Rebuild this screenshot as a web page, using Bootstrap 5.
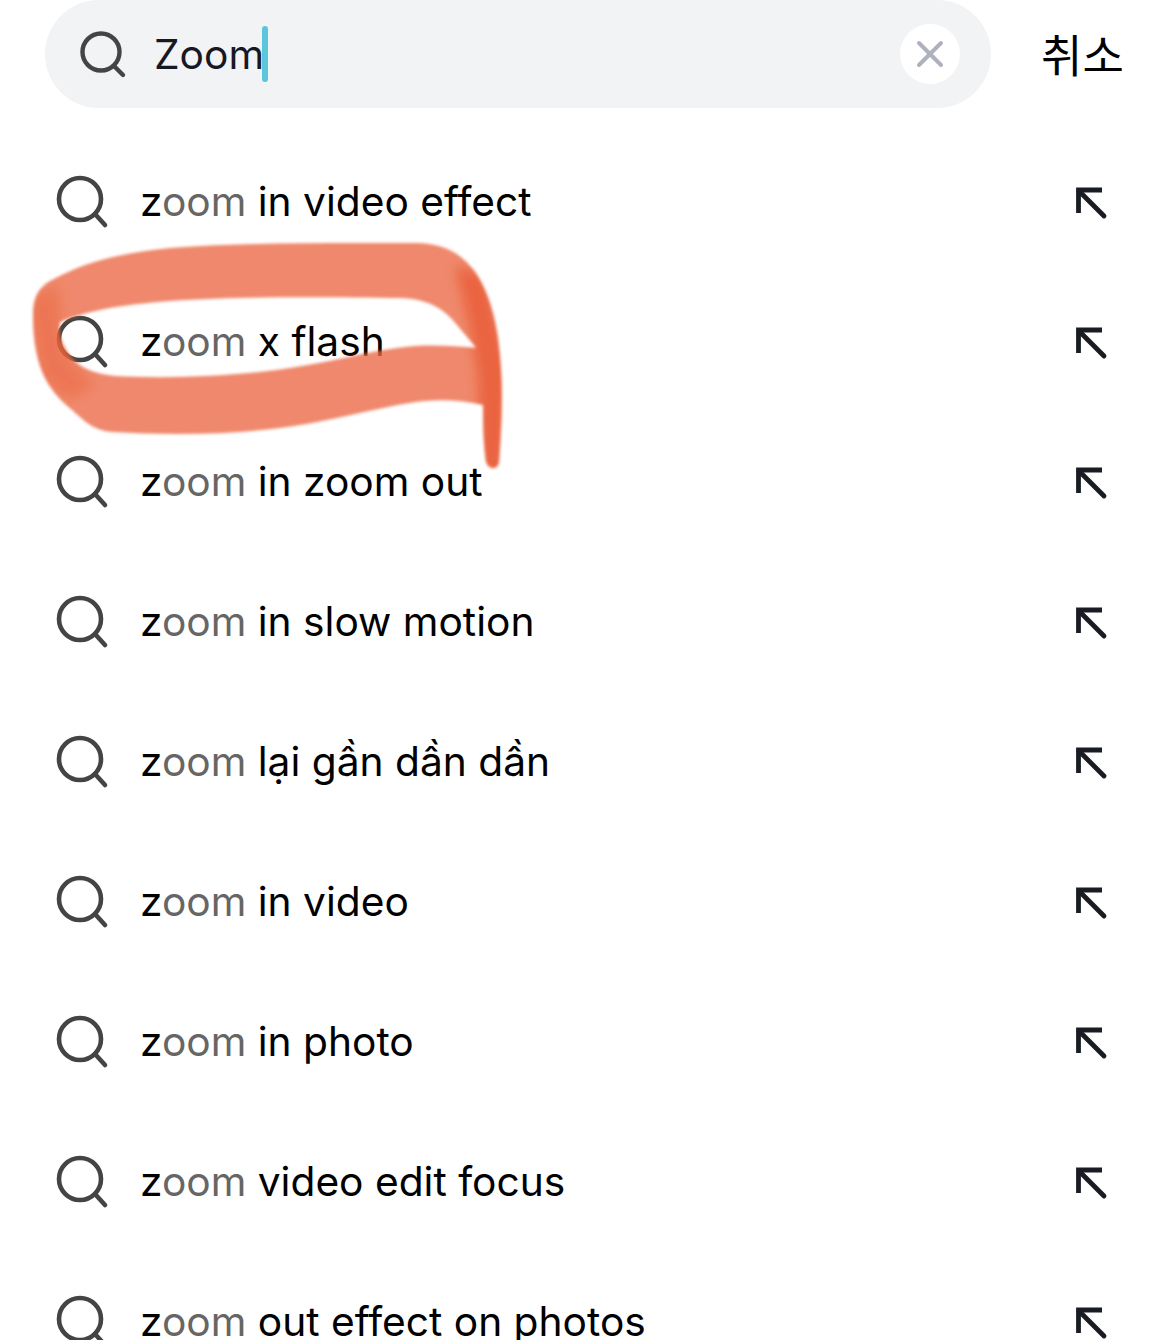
<!DOCTYPE html>
<html lang="ko">

<head>
    <meta charset="UTF-8">
    <meta name="viewport" content="width=device-width, initial-scale=1.0">
    <title>Search</title>
    <link rel="stylesheet" href="https://cdn.jsdelivr.net/npm/bootstrap@5.3.3/dist/css/bootstrap.min.css">
    <script src="https://cdn.jsdelivr.net/npm/bootstrap@5.3.3/dist/js/bootstrap.bundle.min.js"></script>
    <style>
        html, body {
            height: 1340px;
            overflow: hidden;
        }

        body {
            background: #fff;
            font-family: "Inter", "Noto Sans CJK KR", sans-serif;
            font-size: 40.7px;
            line-height: 48px;
            color: #000;
        }

        .page-wrap {
            height: 1340px;
            overflow: hidden;
        }

        .search-top {
            padding-left: 45px;
            padding-right: 47px;
            gap: 50px;
            height: 108px;
        }

        .search-pill {
            height: 108px;
            border-radius: 54px;
            background: #f2f3f5;
            padding: 0 30px 0 34px;
        }

        .top-mag {
            width: 48px;
            height: 50px;
            flex: none;
        }

        .typed-text {
            color: #161823;
            margin-left: 27px;
            margin-right: -2px;
            padding-top: 2px;
        }

        .caret-bar {
            width: 6px;
            height: 56px;
            border-radius: 3px;
            background: #5bc5dc;
            flex: none;
        }

        .clear-btn {
            width: 60px;
            height: 60px;
            border-radius: 50%;
            background: #fff;
            flex: none;
            transform: translateX(-1px);
        }

        .cancel-txt {
            font-family: "Noto Sans CJK KR", sans-serif;
            font-size: 45px;
            color: #000;
            width: 82px;
            text-align: center;
            white-space: nowrap;
        }

        .suggest-list {
            padding-top: 24px;
        }

        .suggest-row {
            height: 140px;
            padding-left: 55px;
            padding-right: 60px;
        }

        .suggest-row .mag-ico {
            width: 54px;
            height: 54px;
            flex: none;
        }

        .suggest-row .arrow-ico {
            width: 34px;
            height: 34px;
            flex: none;
            transform: translate(-1px, 1px);
        }

        .suggest-txt {
            margin-left: 31px;
            white-space: nowrap;
        }

        .typed-part {
            color: #666;
        }

        .scribble {
            position: absolute;
            left: 0;
            top: 0;
            width: 1170px;
            height: 500px;
            pointer-events: none;
        }
    </style>
</head>

<body>
    <div class="page-wrap position-relative">
        <div class="search-top d-flex align-items-center">
            <div class="search-pill d-flex align-items-center flex-grow-1">
                <svg class="top-mag" viewBox="0 0 48 50" fill="none" stroke="#444" stroke-width="4.4">
                    <circle cx="22" cy="23" r="18.5" />
                    <path d="M35 37 L44 46" stroke-linecap="round" />
                </svg>
                <span class="typed-text">Zoom</span>
                <span class="caret-bar"></span>
                <span class="flex-grow-1"></span>
                <span class="clear-btn d-flex align-items-center justify-content-center">
                    <svg width="30" height="30" viewBox="0 0 30 30" fill="none" stroke="#aeb2bd" stroke-width="4" stroke-linecap="round">
                        <path d="M4 4 L26 26 M26 4 L4 26" />
                    </svg>
                </span>
            </div>
            <div class="cancel-txt">취소</div>
        </div>

        <div class="suggest-list" id="suggest-list"></div>

        <!-- hand drawn marker over the second row -->
        <svg class="scribble" viewBox="0 0 1170 500">
            <defs>
                <filter id="marker-blur" x="-5%" y="-5%" width="110%" height="110%">
                    <feGaussianBlur stdDeviation="1.6" />
                </filter>
                <filter id="marker-soft" x="-30%" y="-30%" width="160%" height="160%">
                    <feGaussianBlur stdDeviation="6" />
                </filter>
                <clipPath id="marker-clip">
                    <path clip-rule="evenodd" d="M33 315 C33 298 38 288 50 281 C85 262 115 254 170 248 C250 242 340 243 415 243 C445 243 462 254 476 273 C492 298 499 330 501 370 C503 400 501 435 499 463 C497 470 489 470 486 462 C483 440 483 420 483 405 C465 401 445 399 425 401 C385 405 340 420 280 428 C225 435 165 435 112 432 C95 431 85 422 72 410 C50 392 33 370 33 315 Z M60 322 C90 310 120 305 170 301 C240 296 330 297 400 298 C430 299 445 310 457 325 C465 335 472 342 476 348 C455 346 430 344 405 347 C370 351 340 360 290 368 C240 376 170 379 115 376 C95 374 80 368 72 358 C62 345 58 335 60 322 Z" />
                </clipPath>
            </defs>
            <g filter="url(#marker-blur)">
                <path fill="#ea6842" fill-opacity="0.78" fill-rule="evenodd" d="M33 315 C33 298 38 288 50 281 C85 262 115 254 170 248 C250 242 340 243 415 243 C445 243 462 254 476 273 C492 298 499 330 501 370 C503 400 501 435 499 463 C497 470 489 470 486 462 C483 440 483 420 483 405 C465 401 445 399 425 401 C385 405 340 420 280 428 C225 435 165 435 112 432 C95 431 85 422 72 410 C50 392 33 370 33 315 Z M60 322 C90 310 120 305 170 301 C240 296 330 297 400 298 C430 299 445 310 457 325 C465 335 472 342 476 348 C455 346 430 344 405 347 C370 351 340 360 290 368 C240 376 170 379 115 376 C95 374 80 368 72 358 C62 345 58 335 60 322 Z" />
                <g clip-path="url(#marker-clip)">
                    <path filter="url(#marker-soft)" fill="#e8562c" fill-opacity="0.35" d="M25 300 L58 285 L62 325 L70 360 L95 385 L70 400 L40 380 Z" />
                    <path filter="url(#marker-soft)" fill="#e8562c" fill-opacity="0.7" d="M455 265 L485 275 L510 370 L505 480 L480 480 L478 380 L470 330 Z" />
                </g>
            </g>
        </svg>
    </div>

    <script>
        const suggestions = [
            'in video effect',
            'x flash',
            'in zoom out',
            'in slow motion',
            'lại gần dần dần',
            'in video',
            'in photo',
            'video edit focus',
            'out effect on photos'
        ];

        const list = document.getElementById('suggest-list');
        suggestions.forEach(rest => {
            const row = document.createElement('div');
            row.className = 'suggest-row d-flex align-items-center';
            row.innerHTML = `
                <svg class="mag-ico" viewBox="0 0 54 54" fill="none" stroke="#444" stroke-width="4.6">
                    <circle cx="25" cy="24" r="21" />
                    <path d="M40 39 L50 50" stroke-linecap="round" />
                </svg>
                <span class="suggest-txt">z<span class="typed-part">oom</span> ${rest}</span>
                <span class="flex-grow-1"></span>
                <svg class="arrow-ico" viewBox="0 0 34 34" fill="none" stroke="#1a1c24" stroke-width="4.8">
                    <path d="M3.5 27 V4 H27" />
                    <path d="M4 5 L29 30" stroke-linecap="round" />
                </svg>`;
            list.appendChild(row);
        });
    </script>
</body>

</html>
